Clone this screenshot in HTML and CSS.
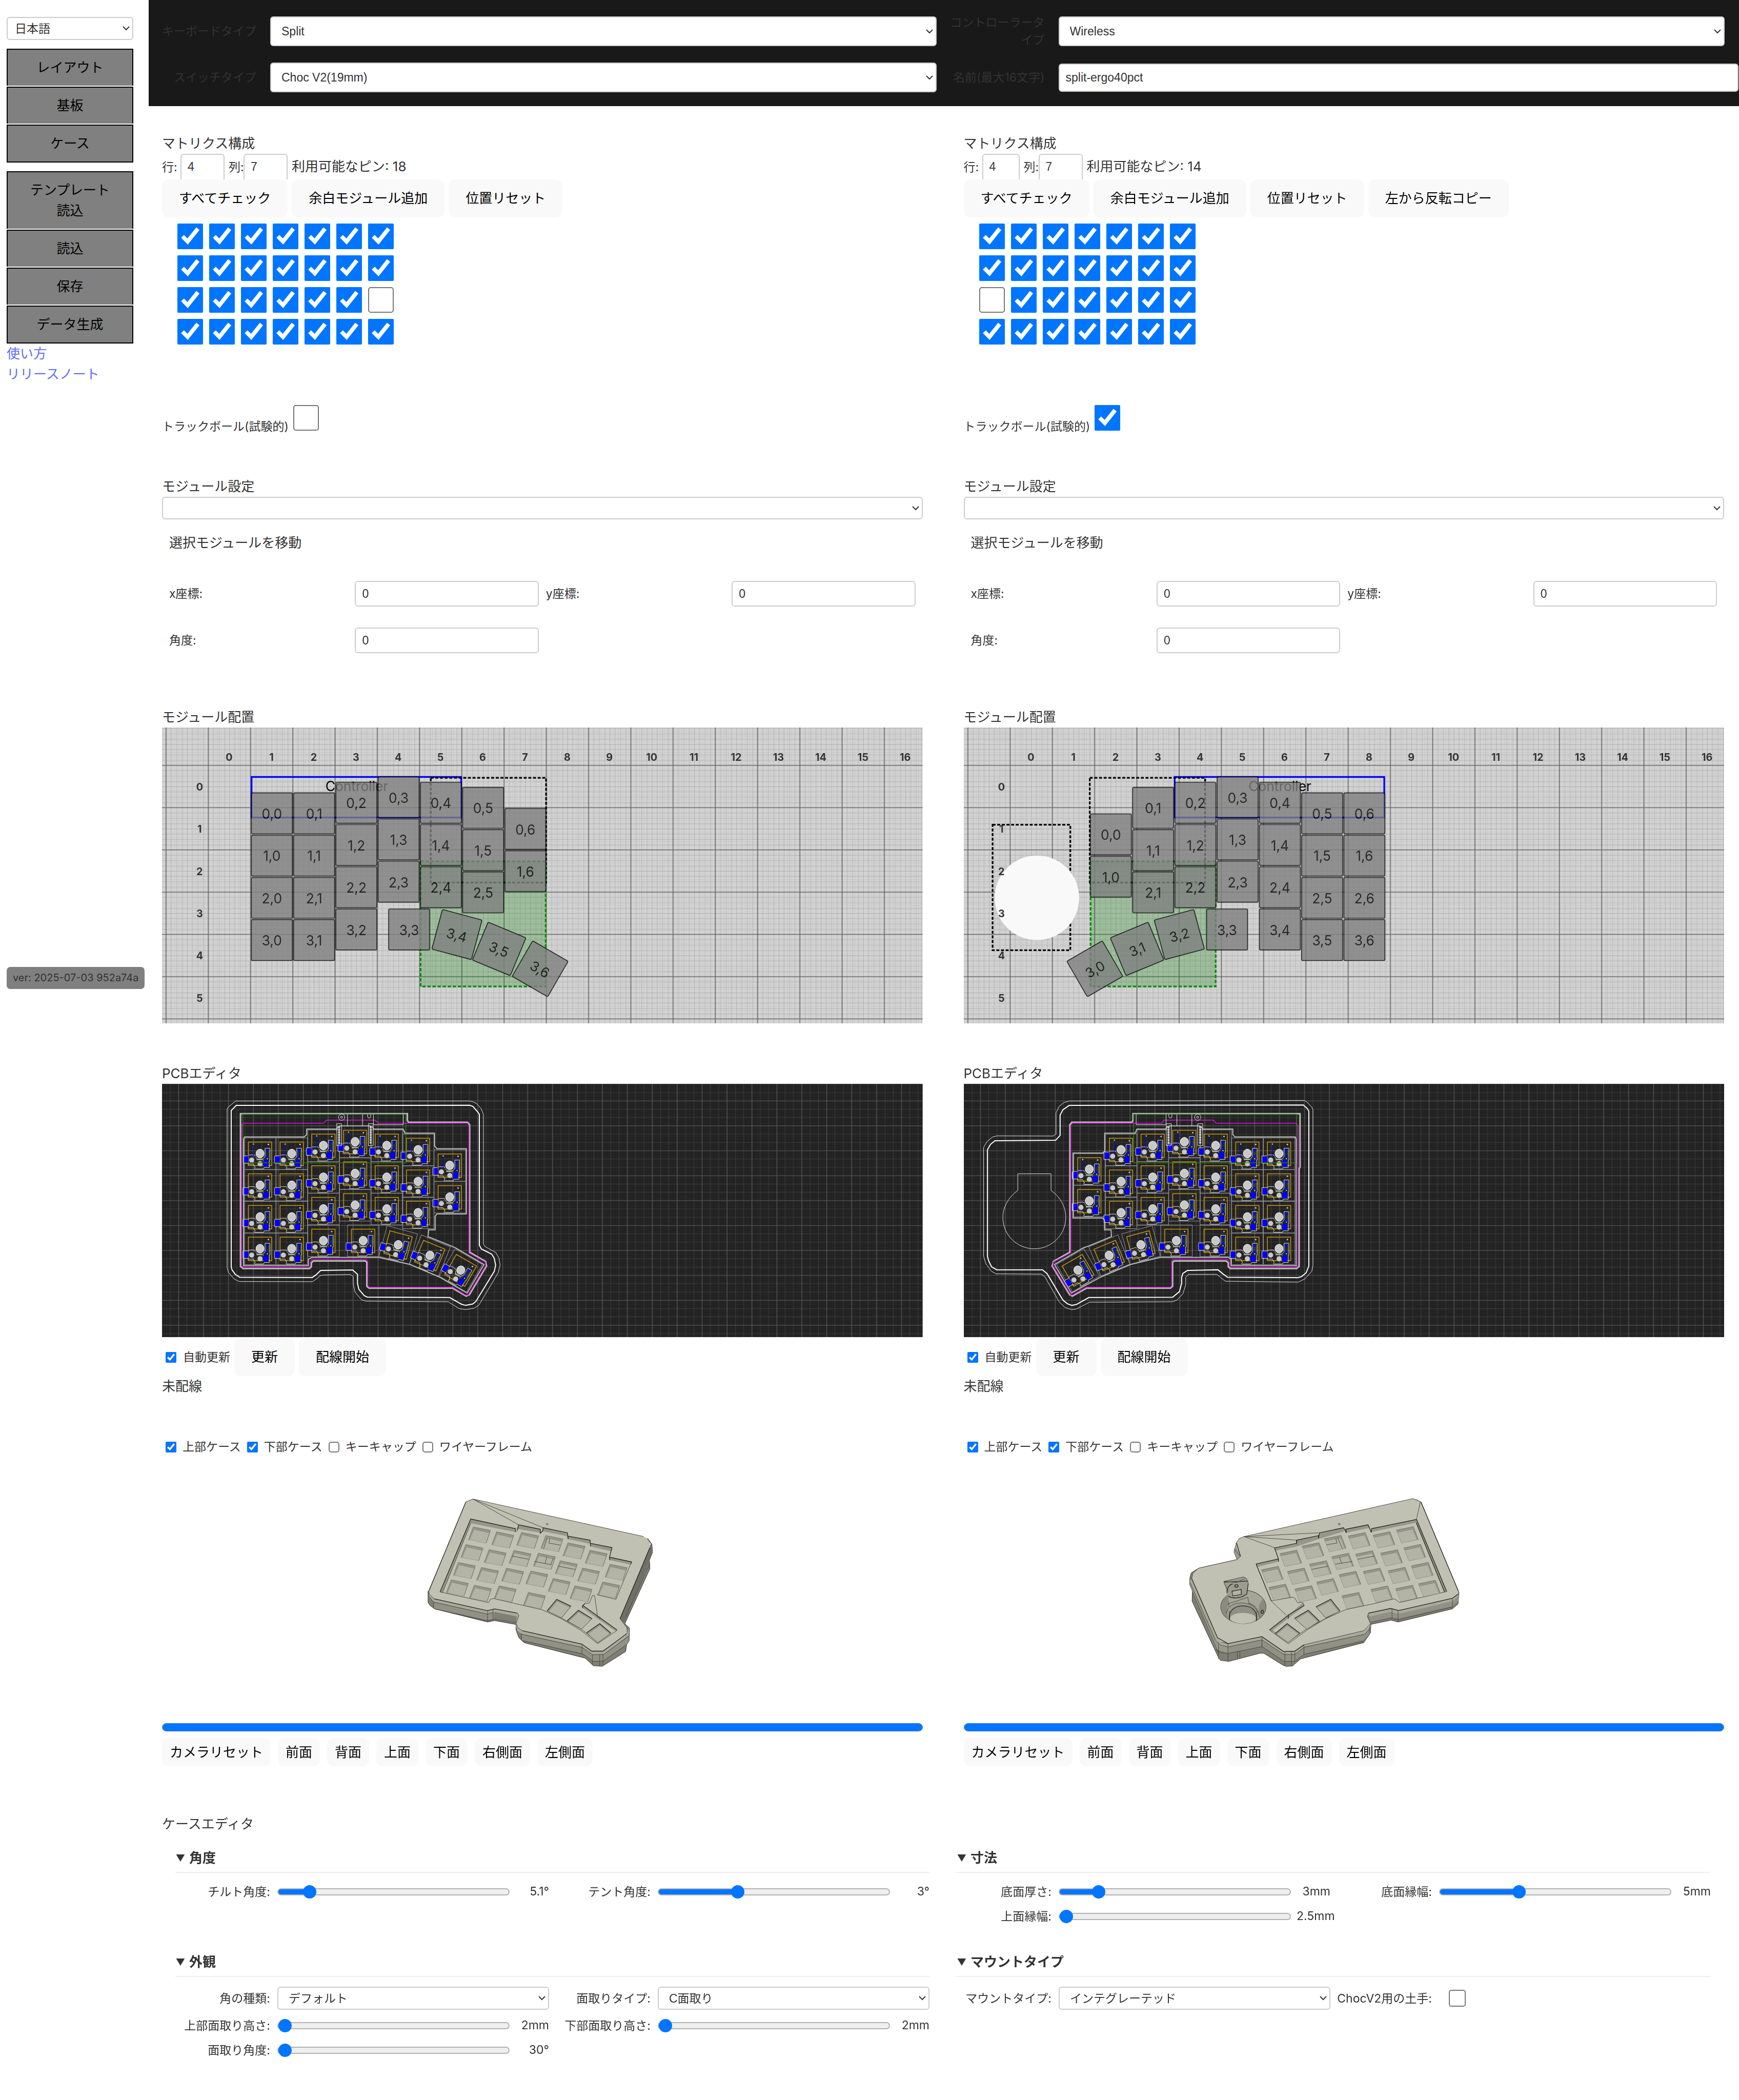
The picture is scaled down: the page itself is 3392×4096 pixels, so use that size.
FILE: index.html
```html
<!DOCTYPE html>
<html lang="ja">
<head>
<meta charset="utf-8">
<title>キーボードエディタ</title>
<link rel="stylesheet" href="styles.css">
</head>
<body>
<svg class="defs" aria-hidden="true">
  <defs>
    <pattern id="grid-tenth" width="10" height="10" patternUnits="userSpaceOnUse" x="9.5" y="9.5"><path d="M0 0H10M0 0V10" class="g-faint"/></pattern>
    <pattern id="grid-eighth" width="12.5" height="12.5" patternUnits="userSpaceOnUse" x="9.5" y="2"><path d="M0 0H12.5M0 0V12.5" class="g-fine"/></pattern>
    <pattern id="grid-unit" width="100" height="100" patternUnits="userSpaceOnUse" x="59.5" y="39.5"><path d="M0 50H100M50 0V100" class="g-unit"/></pattern>
    <pattern id="mm1" width="3.933" height="3.933" patternUnits="userSpaceOnUse" x="39.3" y="40.4"><path d="M0 2H4M2 0V4" class="p-fine"/></pattern>
    <pattern id="mm5" width="19.667" height="19.667" patternUnits="userSpaceOnUse" x="49.1" y="50.2"><path d="M0 9.8H20M9.8 0V20" class="p-mid"/></pattern>
    <pattern id="mm15" width="59" height="59" patternUnits="userSpaceOnUse" x="9.8" y="10.9"><path d="M0 29.5H59M29.5 0V59" class="p-major"/></pattern>
    <rect id="cap" x="-48.5" y="-48.5" width="97" height="97" rx="3"/>

    <!-- switch footprint, origin at the stem -->
    <g id="sw" class="sw">
      <rect x="-37" y="-37" width="74.5" height="74.8" class="cell"/>
      <g transform="scale(.4592 .3571)">
        <rect x="-60" y="-76" width="120" height="155" class="y"/>
        <path class="w" d="M-86 15H-62L-54 9H-28L-24 18M-88 15V65H-62L-56 70H-34L-26 90H-24L-30 98L-28 102H18L22 92H48V42H51V-35H26V20L16 36H-14L-22 22M-62 68V72"/>
        <path class="lg" d="M-18 38H14L22 62M-18 42H10"/>
        <ellipse rx="21" ry="29" class="s wo"/>
        <ellipse cx="-43" cy="43" rx="13" ry="17" class="s"/>
        <ellipse cy="67" rx="13" ry="17" class="s"/>
        <ellipse cx="43" cy="-60" rx="4" ry="5" class="s"/>
        <ellipse cx="38" cy="34" rx="3" ry="4" class="s"/>
        <path class="gn" d="M32 -20H46V25H32Z"/>
        <path class="bl" d="M31 -32V48"/>
        <path class="b" d="M-86 19H-60V60H-86ZM17 46H43V87H17ZM34 -30H43V-12H34ZM34 12H43V28H34Z"/>
      </g>
    </g>
    <g id="swt">
      <use href="#sw"/>
      <path class="bl" d="M-15.6 -22.5V5.4H-29"/>
      <circle cx="-15.6" cy="-22.5" r="1.6" class="s"/>
    </g>

    <!-- key openings of the case model -->
    <g id="hl">
      <path class="floor" d="M0 0L106 25L79 115L-30 91Z"/>
      <path class="wall" d="M0 0L106 25L101 42L6 18L-22 93L-30 91Z"/>
      <path class="e1" d="M-30 91L79 115L101 42L8 18"/>
      <path class="e2" d="M-30 91L0 0L106 25L79 115"/>
    </g>
    <g id="hr">
      <path class="floor" d="M0 0L90 -25L116 67L27 92Z"/>
      <path class="wall" d="M0 0L90 -25L116 67L109 69L85 -7L5 16Z"/>
      <path class="e1" d="M0 0L27 92L116 67M5 16L85 -7"/>
      <path class="e2" d="M0 0L90 -25L116 67"/>
    </g>
  </defs>
</svg>

<div class="app">
<aside class="sidebar">
  <select class="lang" aria-label="言語"><option>日本語</option></select>
  <nav class="menu">
    <button type="button">レイアウト</button>
    <button type="button">基板</button>
    <button type="button">ケース</button>
  </nav>
  <div class="menu">
    <button type="button">テンプレート<br>読込</button>
    <button type="button">読込</button>
    <button type="button">保存</button>
    <button type="button">データ生成</button>
  </div>
  <a href="#usage">使い方</a>
  <a href="#release">リリースノート</a>
  <p class="version">ver: 2025-07-03 952a74a</p>
</aside>

<div class="page">
<header class="topbar">
  <label for="kbd">キーボードタイプ</label>
  <select id="kbd"><option>Split</option></select>
  <label for="ctl">コントローラータイプ</label>
  <select id="ctl"><option>Wireless</option></select>
  <label for="swtype">スイッチタイプ</label>
  <select id="swtype"><option>Choc V2(19mm)</option></select>
  <label for="name">名前(最大16文字)</label>
  <input id="name" type="text" maxlength="16" value="split-ergo40pct">
</header>

<main>
<div class="sides">

<section class="side">
  <h2>マトリクス構成</h2>
  <div class="pins">
    <label for="rl">行:</label><input id="rl" class="num" type="text" value="4">
    <label for="cl">列:</label><input id="cl" class="num" type="text" value="7">
    <span>利用可能なピン: 18</span>
  </div>
  <div class="actions">
    <button type="button">すべてチェック</button>
    <button type="button">余白モジュール追加</button>
    <button type="button">位置リセット</button>
  </div>
  <div class="matrix">
    <input type="checkbox" aria-label="0,0" checked><input type="checkbox" aria-label="0,1" checked><input type="checkbox" aria-label="0,2" checked><input type="checkbox" aria-label="0,3" checked><input type="checkbox" aria-label="0,4" checked><input type="checkbox" aria-label="0,5" checked><input type="checkbox" aria-label="0,6" checked>
    <input type="checkbox" aria-label="1,0" checked><input type="checkbox" aria-label="1,1" checked><input type="checkbox" aria-label="1,2" checked><input type="checkbox" aria-label="1,3" checked><input type="checkbox" aria-label="1,4" checked><input type="checkbox" aria-label="1,5" checked><input type="checkbox" aria-label="1,6" checked>
    <input type="checkbox" aria-label="2,0" checked><input type="checkbox" aria-label="2,1" checked><input type="checkbox" aria-label="2,2" checked><input type="checkbox" aria-label="2,3" checked><input type="checkbox" aria-label="2,4" checked><input type="checkbox" aria-label="2,5" checked><input type="checkbox" aria-label="2,6">
    <input type="checkbox" aria-label="3,0" checked><input type="checkbox" aria-label="3,1" checked><input type="checkbox" aria-label="3,2" checked><input type="checkbox" aria-label="3,3" checked><input type="checkbox" aria-label="3,4" checked><input type="checkbox" aria-label="3,5" checked><input type="checkbox" aria-label="3,6" checked>
  </div>
  <div class="trackball"><label for="tbl">トラックボール(試験的)</label><input id="tbl" type="checkbox"></div>

  <h2>モジュール設定</h2>
  <select class="module" aria-label="モジュール"><option></option></select>
  <div class="move">
    <h3>選択モジュールを移動</h3>
    <div class="fields">
      <div class="field"><label for="xl">x座標:</label><input id="xl" type="text" value="0"></div>
      <div class="field"><label for="yl">y座標:</label><input id="yl" type="text" value="0"></div>
      <div class="field"><label for="al">角度:</label><input id="al" type="text" value="0"></div>
    </div>
  </div>

  <h2 class="canvas-title">モジュール配置</h2>
  <svg class="canvas" viewBox="0 0 1800 700">
    <rect width="1800" height="700" class="board"/>
    <rect width="1800" height="700" fill="url(#grid-tenth)"/><rect width="1800" height="700" fill="url(#grid-eighth)"/><rect width="1800" height="700" fill="url(#grid-unit)"/>
    <rect x="212" y="117" width="496" height="96" class="mcu"/>
    <text x="461" y="151" class="mcu-name">Controller</text>
    <rect x="636" y="119" width="273" height="248" class="battery"/>
    <rect x="612" y="317" width="296" height="296" class="area"/>
    <g class="caps">
      <use href="#cap" x="260" y="203"/><use href="#cap" x="360" y="203"/><use href="#cap" x="460" y="178"/><use href="#cap" x="560" y="165"/><use href="#cap" x="660" y="178"/><use href="#cap" x="760" y="190"/><use href="#cap" x="860" y="240"/>
      <use href="#cap" x="260" y="303"/><use href="#cap" x="360" y="303"/><use href="#cap" x="460" y="278"/><use href="#cap" x="560" y="265"/><use href="#cap" x="660" y="278"/><use href="#cap" x="760" y="290"/><use href="#cap" x="860" y="340"/>
      <use href="#cap" x="260" y="403"/><use href="#cap" x="360" y="403"/><use href="#cap" x="460" y="378"/><use href="#cap" x="560" y="365"/><use href="#cap" x="660" y="378"/><use href="#cap" x="760" y="390"/>
      <use href="#cap" x="260" y="503"/><use href="#cap" x="360" y="503"/><use href="#cap" x="460" y="478"/><use href="#cap" x="585" y="478"/>
      <g transform="translate(698 490) rotate(15)"><use href="#cap"/><text y="13">3,4</text></g>
      <g transform="translate(798 524) rotate(22.5)"><use href="#cap"/><text y="13">3,5</text></g>
      <g transform="translate(895 571) rotate(30)"><use href="#cap"/><text y="13">3,6</text></g>
      <text x="260" y="216">0,0</text><text x="360" y="216">0,1</text><text x="460" y="191">0,2</text><text x="560" y="178">0,3</text><text x="660" y="191">0,4</text><text x="760" y="203">0,5</text><text x="860" y="253">0,6</text>
      <text x="260" y="316">1,0</text><text x="360" y="316">1,1</text><text x="460" y="291">1,2</text><text x="560" y="278">1,3</text><text x="660" y="291">1,4</text><text x="760" y="303">1,5</text><text x="860" y="353">1,6</text>
      <text x="260" y="416">2,0</text><text x="360" y="416">2,1</text><text x="460" y="391">2,2</text><text x="560" y="378">2,3</text><text x="660" y="391">2,4</text><text x="760" y="403">2,5</text>
      <text x="260" y="516">3,0</text><text x="360" y="516">3,1</text><text x="460" y="491">3,2</text><text x="585" y="491">3,3</text>
    </g>
    <g class="ruler">
      <text x="159" y="79">0</text><text x="259" y="79">1</text><text x="359" y="79">2</text><text x="459" y="79">3</text><text x="559" y="79">4</text><text x="659" y="79">5</text><text x="759" y="79">6</text><text x="859" y="79">7</text><text x="959" y="79">8</text><text x="1059" y="79">9</text><text x="1159" y="79">10</text><text x="1259" y="79">11</text><text x="1359" y="79">12</text><text x="1459" y="79">13</text><text x="1559" y="79">14</text><text x="1659" y="79">15</text><text x="1759" y="79">16</text>
      <text x="89" y="149">0</text><text x="89" y="249">1</text><text x="89" y="349">2</text><text x="89" y="449">3</text><text x="89" y="549">4</text><text x="89" y="649">5</text>
    </g>
  </svg>

  <h2 class="pcb-title">PCBエディタ</h2>
  <svg class="canvas" viewBox="0 0 1800 600">
    <rect width="1800" height="600" class="pcb"/>
    <rect width="1800" height="600" fill="url(#mm1)"/><rect width="1800" height="600" fill="url(#mm5)"/><rect width="1800" height="600" fill="url(#mm15)"/>
    <g>
      <use href="#swt" x="232" y="165"/><use href="#swt" x="307" y="165"/><use href="#swt" x="382" y="146"/><use href="#swt" x="457" y="137"/><use href="#swt" x="532" y="146"/><use href="#swt" x="606" y="156"/><use href="#swt" x="681" y="193"/>
      <use href="#sw" x="232" y="240"/><use href="#sw" x="307" y="240"/><use href="#sw" x="382" y="221"/><use href="#sw" x="457" y="212"/><use href="#sw" x="532" y="221"/><use href="#sw" x="606" y="231"/><use href="#sw" x="681" y="268"/>
      <use href="#sw" x="232" y="315"/><use href="#sw" x="307" y="315"/><use href="#sw" x="382" y="296"/><use href="#sw" x="457" y="287"/><use href="#sw" x="532" y="296"/><use href="#sw" x="606" y="305"/>
      <use href="#sw" x="232" y="390"/><use href="#sw" x="307" y="390"/><use href="#sw" x="382" y="371"/><use href="#sw" x="476" y="371"/>
      <use href="#sw" transform="translate(559 381) rotate(15)"/><use href="#sw" transform="translate(634 406) rotate(22.5)"/><use href="#sw" transform="translate(707 441) rotate(30)"/>
    </g>
    <g transform="translate(116 15) scale(.4592 .35714)" class="outline">
      <path class="thin" d="M127 72H1335L1348 76L1368 88L1392 122L1404 160V1020L1412 1036L1467 1075L1484 1112L1490 1160L1480 1210L1380 1425L1355 1445L1312 1454L1280 1448L1222 1402L797 1398L775 1388L742 1338L733 1285V1237L720 1221L576 1225L560 1230L550 1245L523 1269L145 1268L118 1250L90 1208L83 1175V125L90 110Z"/>
      <path class="thick" d="M130 101L1333 100L1350 108L1375 145L1383 160V1027L1393 1052L1447 1087L1460 1115L1467 1160L1460 1200L1365 1400L1348 1417L1312 1426L1290 1418L1230 1374L805 1371L790 1362L762 1320L755 1280V1220L730 1191L565 1195L540 1225L522 1241L148 1240L125 1220L108 1190L104 1170V135Z"/>
      <path class="wide" d="M152 156H1012V200L1018 213H1322L1333 228V1073L1415 1135L1420 1165L1332 1355L1315 1365L1245 1312L815 1312L803 1300V1140L795 1132H527L517 1145V1170L507 1182H165L152 1168Z"/>
      <path class="green" d="M164 160V481H1004V160Z"/>
      <path class="mag" d="M165 219H580L595 198H845L862 219H1322L1329 235V1078L1414 1140L1415 1165L1325 1358L1312 1358L1247 1306H815L808 1295V1135L802 1122H520L512 1140V1165L503 1175H168L158 1160V235Z"/>
      <path class="grey" d="M655 238L648 258H493V295L480 310H173L168 325V1163H502V1120L520 1108H865L1025 1155L1180 1240L1320 1345L1407 1155L1260 1045L1237 1032L1118 970L1122 925H1155V835L1165 820H1316V388H1165L1152 370V285H1000L990 258H838L830 238"/>
      <path class="thin" d="M703 160V237M781 160V237M837 160V228H991V160M807 160V175L811 184H819L823 175V160M648 222H673V368H648ZM811 222H836V368H811ZM660 236H823"/>
      <ellipse class="thin" cx="673" cy="179" rx="16" ry="21"/><ellipse class="thin" cx="673" cy="179" rx="5" ry="7"/>
      <path class="dots" d="M660 238V356M823 238V356"/>
    </g>
  </svg>
  <div class="actions update">
    <label><input type="checkbox" checked>自動更新</label>
    <button type="button">更新</button>
    <button type="button">配線開始</button>
  </div>
  <p class="status">未配線</p>

  <div class="layers">
    <label><input type="checkbox" checked>上部ケース</label>
    <label><input type="checkbox" checked>下部ケース</label>
    <label><input type="checkbox">キーキャップ</label>
    <label><input type="checkbox">ワイヤーフレーム</label>
  </div>
  <svg class="canvas model" viewBox="0 0 1800 610">
    <g transform="translate(596 40) scale(.38265 .33333)">
      <path class="base" d="M88 800L88 880L100 900L128 925L456 1018L500 1008L632 1036L632 1075L650 1130L682 1165L1060 1275L1110 1328L1165 1333L1310 1228L1316 1180L1332 1150L1333 1060L1305 1030L1460 640L1457 580L1476 525L1473 465L1300 600L400 900Z"/>
      <path class="front" d="M125 853L125 922L456 1005L500 995L632 1022L640 965L500 935L455 950ZM670 1080L668 1145L1045 1245L1105 1297L1170 1295L1330 1165L1330 1065L1170 1225L1100 1225L1040 1180ZM500 930L640 958L636 1020L497 992Z"/>
      <path class="right" d="M1473 465L1476 525L1310 1000L1305 1030L1275 995L1460 485Z"/>
      <path class="lip" d="M125 853L455 938L500 925L640 955L650 970L632 1030L645 1060L670 1080L1040 1175L1100 1225L1170 1225L1318 1100L1330 1065V1110L1175 1248H1105L1040 1197L665 1102L640 1080L632 1050L636 978L500 947L455 962L122 875L92 840V800Z"/>
      <path class="e1" d="M92 800L90 830L120 876L455 962L490 950M665 1105L1040 1198L1105 1250L1175 1248L1330 1118M128 925L456 1010L500 997L632 1023M668 1150L1045 1245L1110 1298L1170 1296L1310 1185M456 940V1010M490 930V995M1105 1250V1322M1150 1250V1330M1170 1248V1325M122 880V920M1460 600L1310 985M1040 1180V1245M665 1100V1145"/>
      <path class="face" d="M322 165L340 155L366 145L380 150L1420 411L1445 425L1462 455L1460 490L1275 995L1300 1030L1318 1060L1320 1095L1305 1120L1170 1222L1130 1228L1100 1225L1040 1175L670 1080L645 1060L632 1030L650 970L640 955L500 925L455 938L125 853L95 820L92 795Z"/>
      <path class="wall" d="M352 287L628 355L628 380L352 317L178 808L162 805ZM648 328L785 362L783 385L636 356ZM800 349L950 385L952 408L1090 437L1095 460L1226 490L1218 515L1095 482L1088 462L952 430L945 408L797 373ZM1210 558L1347 592L1343 612L1210 578ZM1045 900L1257 1075L1250 1085L1042 918Z"/>
      <path class="e2" d="M162 805L352 287L628 355L630 380M640 370L648 328L782 360V387L797 373L800 349L950 385L955 430M952 408L1090 437L1093 480M1095 460L1226 490L1210 558L1212 580M1210 558L1347 592L1343 605M1060 885L1042 905L1045 920M1045 900L1257 1075"/>
      <path class="e1" d="M1343 600L1250 857L1132 825M162 805L462 880L475 855L495 852L675 900L795 932L905 990L1030 1075L1137 1172L1257 1078M905 985L1035 1068L1137 1160M366 145L648 328M366 145L800 349M178 808L352 317M1060 885H1085L1105 830H1118L1138 990M1150 1000V980"/>
      <use href="#hl" x="368" y="343"/><use href="#hl" x="512" y="378"/><use href="#hl" x="666" y="382"/><use href="#hl" x="816" y="404"/><use href="#hl" x="953" y="456"/><use href="#hl" x="1090" y="509"/><use href="#hl" x="1213" y="608"/>
      <use href="#hl" x="322" y="468"/><use href="#hl" x="465" y="504"/><use href="#hl" x="619" y="510"/><use href="#hl" x="770" y="530"/><use href="#hl" x="905" y="583"/><use href="#hl" x="1043" y="635"/><use href="#hl" x="1168" y="734"/>
      <use href="#hl" x="275" y="595"/><use href="#hl" x="418" y="631"/><use href="#hl" x="573" y="636"/><use href="#hl" x="723" y="656"/><use href="#hl" x="861" y="709"/><use href="#hl" x="996" y="761"/>
      <use href="#hl" x="231" y="719"/><use href="#hl" x="374" y="757"/><use href="#hl" x="527" y="761"/><use href="#hl" x="708" y="808"/>
      <path class="floor" d="M884 858L972 906L913 989L824 939ZM1018 935L1102 994L1037 1069L948 1010ZM1150 1030L1219 1098L1137 1166L1068 1095Z"/>
      <path class="wall" d="M884 858L972 906L965 917L886 873L836 945L824 939ZM1018 935L1102 994L1094 1002L1020 950L958 1016L948 1010ZM1150 1030L1219 1098L1211 1104L1150 1045L1078 1105L1068 1095Z"/>
      <path class="e2" d="M824 939L884 858L972 906M948 1010L1018 935L1102 994M1068 1095L1150 1030L1219 1098"/>
      <path class="e1" d="M824 939L913 989L972 906M948 1010L1037 1069L1102 994M1068 1095L1137 1166L1219 1098M825 422L802 500M840 425L836 458L905 472M608 550L712 573M745 588L852 612M822 555L812 602M862 565L848 608M895 622L998 645"/>
      <path class="e2" d="M322 165L92 800M1460 490L1275 995M1445 425L1470 465M125 853L455 938L500 925L640 955M670 1080L1040 1175L1100 1225L1170 1225L1318 1100"/>
      <path class="e1" d="M92 795L95 820L125 853M640 955L650 970L632 1030L645 1060L670 1080M322 165L366 145L1420 411M1275 995L1318 1060L1320 1095"/>
      <ellipse cx="825" cy="323" rx="5" ry="6" class="e1"/>
    </g>
  </svg>
  <progress value="1" max="1" aria-label="進捗"></progress>
  <div class="views">
    <button type="button">カメラリセット</button>
    <button type="button">前面</button>
    <button type="button">背面</button>
    <button type="button">上面</button>
    <button type="button">下面</button>
    <button type="button">右側面</button>
    <button type="button">左側面</button>
  </div>
</section>

<section class="side">
  <h2>マトリクス構成</h2>
  <div class="pins">
    <label for="rr">行:</label><input id="rr" class="num narrow" type="text" value="4">
    <label for="cr">列:</label><input id="cr" class="num" type="text" value="7">
    <span>利用可能なピン: 14</span>
  </div>
  <div class="actions">
    <button type="button">すべてチェック</button>
    <button type="button">余白モジュール追加</button>
    <button type="button">位置リセット</button>
    <button type="button">左から反転コピー</button>
  </div>
  <div class="matrix">
    <input type="checkbox" aria-label="0,0" checked><input type="checkbox" aria-label="0,1" checked><input type="checkbox" aria-label="0,2" checked><input type="checkbox" aria-label="0,3" checked><input type="checkbox" aria-label="0,4" checked><input type="checkbox" aria-label="0,5" checked><input type="checkbox" aria-label="0,6" checked>
    <input type="checkbox" aria-label="1,0" checked><input type="checkbox" aria-label="1,1" checked><input type="checkbox" aria-label="1,2" checked><input type="checkbox" aria-label="1,3" checked><input type="checkbox" aria-label="1,4" checked><input type="checkbox" aria-label="1,5" checked><input type="checkbox" aria-label="1,6" checked>
    <input type="checkbox" aria-label="2,0"><input type="checkbox" aria-label="2,1" checked><input type="checkbox" aria-label="2,2" checked><input type="checkbox" aria-label="2,3" checked><input type="checkbox" aria-label="2,4" checked><input type="checkbox" aria-label="2,5" checked><input type="checkbox" aria-label="2,6" checked>
    <input type="checkbox" aria-label="3,0" checked><input type="checkbox" aria-label="3,1" checked><input type="checkbox" aria-label="3,2" checked><input type="checkbox" aria-label="3,3" checked><input type="checkbox" aria-label="3,4" checked><input type="checkbox" aria-label="3,5" checked><input type="checkbox" aria-label="3,6" checked>
  </div>
  <div class="trackball"><label for="tbr">トラックボール(試験的)</label><input id="tbr" type="checkbox" checked></div>

  <h2>モジュール設定</h2>
  <select class="module" aria-label="モジュール"><option></option></select>
  <div class="move">
    <h3>選択モジュールを移動</h3>
    <div class="fields">
      <div class="field"><label for="xr">x座標:</label><input id="xr" type="text" value="0"></div>
      <div class="field"><label for="yr">y座標:</label><input id="yr" type="text" value="0"></div>
      <div class="field"><label for="ar">角度:</label><input id="ar" type="text" value="0"></div>
    </div>
  </div>

  <h2 class="canvas-title">モジュール配置</h2>
  <svg class="canvas" viewBox="0 0 1800 700">
    <rect width="1800" height="700" class="board"/>
    <rect width="1800" height="700" fill="url(#grid-tenth)"/><rect width="1800" height="700" fill="url(#grid-eighth)"/><rect width="1800" height="700" fill="url(#grid-unit)"/>
    <rect x="499" y="117" width="496" height="96" class="mcu"/>
    <text x="748" y="151" class="mcu-name">Controller</text>
    <rect x="298" y="119" width="273" height="248" class="battery"/>
    <rect x="300" y="317" width="296" height="296" class="area"/>
    <rect x="68" y="230" width="184" height="297" class="battery"/>
    <circle cx="173" cy="403" r="100" class="ball"/>
    <g class="caps">
      <use href="#cap" x="348" y="253"/><use href="#cap" x="448" y="190"/><use href="#cap" x="548" y="178"/><use href="#cap" x="648" y="165"/><use href="#cap" x="748" y="178"/><use href="#cap" x="848" y="203"/><use href="#cap" x="948" y="203"/>
      <use href="#cap" x="348" y="353"/><use href="#cap" x="448" y="290"/><use href="#cap" x="548" y="278"/><use href="#cap" x="648" y="265"/><use href="#cap" x="748" y="278"/><use href="#cap" x="848" y="303"/><use href="#cap" x="948" y="303"/>
      <use href="#cap" x="448" y="390"/><use href="#cap" x="548" y="378"/><use href="#cap" x="648" y="365"/><use href="#cap" x="748" y="378"/><use href="#cap" x="848" y="403"/><use href="#cap" x="948" y="403"/>
      <use href="#cap" x="623" y="478"/><use href="#cap" x="748" y="478"/><use href="#cap" x="848" y="503"/><use href="#cap" x="948" y="503"/>
      <g transform="translate(510 490) rotate(-15)"><use href="#cap"/><text y="13">3,2</text></g>
      <g transform="translate(410 524) rotate(-22.5)"><use href="#cap"/><text y="13">3,1</text></g>
      <g transform="translate(310 571) rotate(-30)"><use href="#cap"/><text y="13">3,0</text></g>
      <text x="348" y="266">0,0</text><text x="448" y="203">0,1</text><text x="548" y="191">0,2</text><text x="648" y="178">0,3</text><text x="748" y="191">0,4</text><text x="848" y="216">0,5</text><text x="948" y="216">0,6</text>
      <text x="348" y="366">1,0</text><text x="448" y="303">1,1</text><text x="548" y="291">1,2</text><text x="648" y="278">1,3</text><text x="748" y="291">1,4</text><text x="848" y="316">1,5</text><text x="948" y="316">1,6</text>
      <text x="448" y="403">2,1</text><text x="548" y="391">2,2</text><text x="648" y="378">2,3</text><text x="748" y="391">2,4</text><text x="848" y="416">2,5</text><text x="948" y="416">2,6</text>
      <text x="623" y="491">3,3</text><text x="748" y="491">3,4</text><text x="848" y="516">3,5</text><text x="948" y="516">3,6</text>
    </g>
    <g class="ruler">
      <text x="159" y="79">0</text><text x="259" y="79">1</text><text x="359" y="79">2</text><text x="459" y="79">3</text><text x="559" y="79">4</text><text x="659" y="79">5</text><text x="759" y="79">6</text><text x="859" y="79">7</text><text x="959" y="79">8</text><text x="1059" y="79">9</text><text x="1159" y="79">10</text><text x="1259" y="79">11</text><text x="1359" y="79">12</text><text x="1459" y="79">13</text><text x="1559" y="79">14</text><text x="1659" y="79">15</text><text x="1759" y="79">16</text>
      <text x="89" y="149">0</text><text x="89" y="249">1</text><text x="89" y="349">2</text><text x="89" y="449">3</text><text x="89" y="549">4</text><text x="89" y="649">5</text>
    </g>
  </svg>

  <h2 class="pcb-title">PCBエディタ</h2>
  <svg class="canvas" viewBox="0 0 1800 600">
    <rect width="1800" height="600" class="pcb"/>
    <rect width="1800" height="600" fill="url(#mm1)"/><rect width="1800" height="600" fill="url(#mm5)"/><rect width="1800" height="600" fill="url(#mm15)"/>
    <g>
      <use href="#swt" x="297" y="202"/><use href="#swt" x="372" y="156"/><use href="#swt" x="447" y="146"/><use href="#swt" x="522" y="137"/><use href="#swt" x="596" y="146"/><use href="#swt" x="671" y="165"/><use href="#swt" x="746" y="165"/>
      <use href="#sw" x="297" y="277"/><use href="#sw" x="372" y="231"/><use href="#sw" x="447" y="221"/><use href="#sw" x="522" y="212"/><use href="#sw" x="596" y="221"/><use href="#sw" x="671" y="240"/><use href="#sw" x="746" y="240"/>
      <use href="#sw" x="372" y="305"/><use href="#sw" x="447" y="296"/><use href="#sw" x="522" y="287"/><use href="#sw" x="596" y="296"/><use href="#sw" x="671" y="315"/><use href="#sw" x="746" y="315"/>
      <use href="#sw" x="503" y="371"/><use href="#sw" x="596" y="371"/><use href="#sw" x="671" y="390"/><use href="#sw" x="746" y="390"/>
      <use href="#sw" transform="translate(419 381) rotate(-15)"/><use href="#sw" transform="translate(344 406) rotate(-22.5)"/><use href="#sw" transform="translate(270 441) rotate(-30)"/>
    </g>
    <g transform="translate(20 15) scale(.5357 .35714)" class="outline">
      <path class="thin" d="M428 72L1468 68L1480 80L1500 112L1505 130V1160L1500 1200L1470 1250L1440 1272L1118 1266L1100 1245L1080 1220H955L943 1240V1290L930 1350L905 1390L885 1402L518 1405L460 1450L438 1454L410 1440L385 1405L320 1235L305 1219L105 1217L85 1200L60 1150L50 1100V380L65 340L90 310L108 303L357 304L370 290V150L385 105L405 82Z"/>
      <path class="thick" d="M428 101L1463 98L1480 122L1487 140V1165L1475 1210L1455 1235L1440 1242L1128 1240L1108 1218L1085 1190L950 1195L930 1215L925 1240V1280L915 1335L885 1372L515 1374L460 1420L440 1426L420 1415L400 1390L330 1215L310 1190H108L85 1170L72 1130L67 1100V395L80 360L100 335L368 332L388 300V165L400 130Z"/>
      <path class="wide" d="M1448 156H710V200L705 213H440L431 228V1073L358 1135L353 1165L430 1355L442 1365L505 1312L875 1312L885 1300V1140L892 1132H1122L1131 1145V1170L1140 1182H1433L1444 1168V520L1448 510Z"/>
      <path class="green" d="M713 160V481H1433V160Z"/>
      <path class="mag" d="M1430 219H1077L1065 198H848L836 219H442L435 235V1078L357 1140V1165L436 1358L446 1355L503 1306H875L881 1295V1135L886 1122H1128L1135 1140V1165L1143 1175H1428L1439 1160V235Z"/>
      <path class="grey" d="M1010 238L1018 258H1151V295L1160 310H1427L1431 325V1163H1143V1120L1130 1108H830L700 1155L565 1240L438 1345L363 1155L490 1045L515 1032L615 970L613 925H584V860L575 847H445V417H575L585 405V285H720L727 258H855L862 238"/>
      <path class="thin" d="M904 160V237M970 160V237M724 160V228H856V160M868 160V175L872 184H878L882 175V160M857 222H879V368H857ZM996 222H1018V368H996ZM867 236H1007"/>
      <ellipse class="thin" cx="996" cy="179" rx="14" ry="21"/><ellipse class="thin" cx="996" cy="179" rx="4" ry="7"/>
      <path class="dots" d="M867 238V356M1007 238V356"/>
      <path class="thin" d="M201 554H348V664C390 710 413 775 413 843C413 960 350 1051 274 1051C198 1051 135 960 135 843C135 775 160 710 201 664Z"/>
    </g>
  </svg>
  <div class="actions update">
    <label><input type="checkbox" checked>自動更新</label>
    <button type="button">更新</button>
    <button type="button">配線開始</button>
  </div>
  <p class="status">未配線</p>

  <div class="layers">
    <label><input type="checkbox" checked>上部ケース</label>
    <label><input type="checkbox" checked>下部ケース</label>
    <label><input type="checkbox">キーキャップ</label>
    <label><input type="checkbox">ワイヤーフレーム</label>
  </div>
  <svg class="canvas model" viewBox="0 0 1800 610">
    <g transform="translate(500 40) scale(.44643 .33333)">
      <path class="base" d="M325 455L312 520L328 575L125 636L85 670L77 715V750L92 800L90 870L228 1265L240 1290L285 1298L450 1240L470 1240L572 1325L590 1333L622 1331L665 1280L1000 1165L1036 1095L1038 1035L1145 1005L1182 1018L1470 925L1500 890L1505 810L1303 165Z"/>
      <path class="left" d="M88 710L225 1130L280 1172V1240L215 1210L77 750V715ZM325 455L347 552L328 575L312 520Z"/>
      <path class="front" d="M280 1172L460 1122V1195L280 1240ZM460 1122L575 1228L635 1225V1297L578 1298L465 1195ZM683 1180L1000 1080L1036 1040V1095L1000 1145L683 1248L635 1297V1225ZM1025 955L1143 922L1185 937L1470 850L1502 815V870L1470 905L1182 995L1145 988L1036 1020Z"/>
      <path class="lip" d="M88 710L225 1130L245 1160L280 1172L460 1122L575 1228H635L683 1180L1000 1080L1030 1050L1036 1060L1005 1105L683 1198L637 1247L578 1250L460 1145L280 1195L240 1182L215 1150L80 740ZM1025 960L1143 922L1185 937L1470 850L1502 815V835L1472 870L1185 960L1143 945L1030 980Z"/>
      <path class="e1" d="M80 740L215 1150L240 1182L280 1195L460 1145L578 1250L637 1247L683 1198L1005 1105L1036 1060M215 1210L240 1235L280 1242L460 1193L578 1298L637 1297L683 1248L1000 1155M1036 1020L1145 990L1182 1002L1470 912M230 1165V1280M280 1172V1296M330 1230V1278M343 1226V1273M460 1125V1195M582 1230V1330M617 1230V1330M635 1228V1297M683 1182V1248M1150 928V992M1182 940V1015M1030 1050V1095M1470 855V920M90 800L230 1240M347 552L312 500"/>
      <path class="face" d="M325 455L340 425L365 412L1260 142L1285 148L1303 165L1502 800L1500 820L1470 850L1185 937L1143 922L1025 955L1020 980L1036 1030L1030 1050L1000 1080L683 1180L635 1225L575 1228L460 1122L280 1172L245 1160L225 1130L88 710L95 670L125 636L328 575L347 552L325 490Z"/>
      <path class="wall" d="M1278 287L1042 355L1040 380L1278 312L1428 805L1440 802ZM1023 328L905 360L908 385L1030 350ZM893 349L765 385L760 405L645 437L643 465L527 492L533 512L643 482L760 430L895 375ZM548 570L430 606L433 628L548 590ZM680 878L685 905L510 1085L500 1075L605 965Z"/>
      <path class="e2" d="M1440 802L1280 290L1042 355L1040 382L1023 328L905 360L908 385L893 349L765 385L760 425V405L645 437L643 465V437M643 460L527 492L548 570V590M548 570L430 606L435 625L510 868M500 1075L605 965L685 900M600 965V995M1278 312L1428 805"/>
      <path class="e1" d="M510 868L625 842L635 850L650 882L672 878L685 900M500 1075L600 1173L700 1075L790 1000L905 930L1065 885L1155 855L1165 855L1190 880L1440 802M510 870L590 970M510 1075L600 1160L700 1065L850 955M365 412L760 385M365 412L645 437M365 412L527 490M1300 165L1280 287M280 1172L245 1160M1025 955L1020 980"/>
      <use href="#hr" x="457" y="648"/><use href="#hr" x="555" y="533"/><use href="#hr" x="673" y="480"/><use href="#hr" x="790" y="428"/><use href="#hr" x="918" y="408"/><use href="#hr" x="1049" y="402"/><use href="#hr" x="1173" y="366"/>
      <use href="#hr" x="496" y="774"/><use href="#hr" x="595" y="660"/><use href="#hr" x="712" y="608"/><use href="#hr" x="830" y="555"/><use href="#hr" x="957" y="537"/><use href="#hr" x="1089" y="530"/><use href="#hr" x="1212" y="492"/>
      <use href="#hr" x="634" y="785"/><use href="#hr" x="750" y="735"/><use href="#hr" x="869" y="683"/><use href="#hr" x="997" y="660"/><use href="#hr" x="1129" y="655"/><use href="#hr" x="1252" y="620"/>
      <use href="#hr" x="884" y="833"/><use href="#hr" x="1037" y="787"/><use href="#hr" x="1169" y="782"/><use href="#hr" x="1290" y="747"/>
      <path class="floor" d="M747 910L825 857L874 940L798 989ZM633 992L706 935L765 1012L698 1070ZM531 1100L594 1030L661 1098L599 1164Z"/>
      <path class="wall" d="M747 910L825 857L874 940L866 944L822 873L753 920ZM633 992L706 935L765 1012L757 1018L704 950L640 1002ZM531 1100L594 1030L661 1098L653 1104L594 1046L538 1108Z"/>
      <path class="e2" d="M747 910L825 857L874 940M633 992L706 935L765 1012M531 1100L594 1030L661 1098"/>
      <path class="e1" d="M747 910L798 989L874 940M633 992L698 1070L765 1012M531 1100L599 1164L661 1098M802 470L858 458L852 425M862 420L888 500M968 573L1058 550M848 608L940 588M872 558L882 600M722 645L812 622"/>
      <path class="e2" d="M1303 165L1502 800M1470 850L1185 937L1143 922L1025 955M683 1180L635 1225L575 1228L460 1122L280 1172L225 1130L88 710M1500 820L1470 850M325 455L347 552"/>
      <path class="e1" d="M88 710L95 670L125 636L328 575L347 552M325 455L340 425L365 412L1260 142L1303 165M683 1180L1000 1080L1036 1030L1020 980"/>
      <ellipse cx="870" cy="323" rx="5" ry="6" class="e1"/>
      <!-- trackball socket -->
      <ellipse cx="362" cy="911" rx="120" ry="119" class="bowl"/>
      <path class="bowl-dark" d="M280 820C235 870 235 950 285 1005L275 930L285 880ZM440 1000C480 960 490 900 465 850L445 900Z"/>
      <path class="collar" d="M272 960C275 900 320 880 358 883C400 885 440 920 448 985L432 1005C440 930 400 903 358 903C320 903 280 935 288 1000Z"/>
      <path class="tube" d="M288 1000C280 935 320 903 358 903C400 903 440 930 432 1010C400 1035 320 1035 288 1000Z"/>
      <ellipse cx="360" cy="992" rx="68" ry="38" class="face"/>
      <path class="e1" d="M272 960C275 900 320 880 358 883C400 885 440 920 448 985M280 890L385 843L390 880L425 910M285 880V910M288 940V1000M432 940V1008M390 885C420 895 440 930 442 960"/>
      <path class="e2" d="M288 1000C280 935 320 903 358 903C400 903 440 930 432 1010"/>
      <path class="collar" d="M258 730L362 698L378 708L388 745L380 820C350 850 310 860 285 845L272 800Z"/>
      <path class="e2" d="M258 735L388 728M275 815C275 780 285 755 305 748M388 745L380 820C350 850 310 855 282 835M302 800L350 787L352 822L306 832Z"/>
      <path class="e1" d="M258 730L362 698L378 708L388 745M258 735L280 800M262 730L325 738L370 710"/>
      <path class="floor" d="M304 802L348 790V820L307 830Z"/>
      <ellipse cx="325" cy="762" rx="9" ry="9" class="e2"/><ellipse cx="462" cy="946" rx="6" ry="12" class="e2"/>
    </g>
  </svg>
  <progress value="1" max="1" aria-label="進捗"></progress>
  <div class="views">
    <button type="button">カメラリセット</button>
    <button type="button">前面</button>
    <button type="button">背面</button>
    <button type="button">上面</button>
    <button type="button">下面</button>
    <button type="button">右側面</button>
    <button type="button">左側面</button>
  </div>
</section>
</div>

<section class="case">
  <h2>ケースエディタ</h2>
  <div class="groups">
    <div class="group">
      <h4><span class="mark">▼</span>角度</h4>
      <div class="params">
        <div class="param"><label for="tilt">チルト角度:</label><input id="tilt" type="range" min="0" max="45" step="0.1" value="5.1" style="--p:.113"><output>5.1°</output></div>
        <div class="param"><label for="tent">テント角度:</label><input id="tent" type="range" min="0" max="9" step="0.1" value="3" style="--p:.333"><output>3°</output></div>
      </div>
    </div>
    <div class="group">
      <h4><span class="mark">▼</span>寸法</h4>
      <div class="params">
        <div class="param"><label for="thick">底面厚さ:</label><input id="thick" type="range" min="0" max="20" step="0.1" value="3" style="--p:.15"><output>3mm</output></div>
        <div class="param"><label for="brim">底面縁幅:</label><input id="brim" type="range" min="0" max="15" step="0.1" value="5" style="--p:.333"><output>5mm</output></div>
        <div class="param"><label for="top">上面縁幅:</label><input id="top" type="range" min="2.5" max="10" step="0.1" value="2.5" style="--p:0"><output>2.5mm</output></div>
      </div>
    </div>
    <div class="group">
      <h4><span class="mark">▼</span>外観</h4>
      <div class="params">
        <div class="param"><label for="corner">角の種類:</label><select id="corner"><option>デフォルト</option></select></div>
        <div class="param"><label for="cham">面取りタイプ:</label><select id="cham"><option>C面取り</option></select></div>
        <div class="param"><label for="ch1">上部面取り高さ:</label><input id="ch1" type="range" min="2" max="10" value="2" style="--p:0"><output>2mm</output></div>
        <div class="param"><label for="ch2">下部面取り高さ:</label><input id="ch2" type="range" min="2" max="10" value="2" style="--p:0"><output>2mm</output></div>
        <div class="param"><label for="ch3">面取り角度:</label><input id="ch3" type="range" min="30" max="60" value="30" style="--p:0"><output>30°</output></div>
      </div>
    </div>
    <div class="group">
      <h4><span class="mark">▼</span>マウントタイプ</h4>
      <div class="params">
        <div class="param"><label for="mount">マウントタイプ:</label><select id="mount"><option>インテグレーテッド</option></select></div>
        <div class="param"><label for="bank">ChocV2用の土手:</label><input id="bank" class="bank" type="checkbox"></div>
      </div>
    </div>
  </div>
</section>
</main>
</div>
</div>
</body>
</html>
```
FILE: styles.css
```css
* { box-sizing: border-box; }
body {
  margin: 0;
  background: #fff;
  color: #333;
  font: 400 26px/40px Inter, "Noto Sans CJK JP", sans-serif;
  overflow-x: hidden;
}
h2, h3, h4, p { margin: 0; font-size: 26px; font-weight: 400; line-height: 40px; }
button, input, select { font: inherit; color: inherit; margin: 0; }
label { font-size: 23px; line-height: 34px; }
.defs { position: absolute; width: 0; height: 0; }

.app { display: flex; align-items: flex-start; }
.page { flex: 1; min-width: 0; }

/* form controls */
select, input[type="text"] {
  border: 2px solid #ccc;
  border-radius: 6px;
  background: #fff;
  font-family: "Liberation Sans", "Noto Sans CJK JP", sans-serif;
  font-size: 23px;
}
input[type="text"] { padding: 0 12px; }
select {
  appearance: none;
  background: #fff url("data:image/svg+xml,%3Csvg xmlns='http://www.w3.org/2000/svg' width='14' height='9'%3E%3Cpath d='M1 1l6 6 6-6' fill='none' stroke='%23333' stroke-width='2'/%3E%3C/svg%3E") no-repeat right 5px center;
  padding: 0 20px;
}
input[type="checkbox"] { accent-color: #0075ff; flex: none; }
input[type="checkbox"]:not(:checked) {
  appearance: none;
  border: 2px solid #767676;
  border-radius: 5px;
  background: #fff;
}
button { border: 0; background: #f9f9f9; color: #000; border-radius: 13px; white-space: nowrap; }

/* sidebar */
.sidebar {
  flex: none;
  width: 290px;
  padding: 33px 30px 0 13px;
  display: flex;
  flex-direction: column;
}
.lang { height: 45px; padding: 0 14px; }
.menu { display: flex; flex-direction: column; gap: 2px; margin-top: 17px; }
.menu button {
  min-height: 72px;
  padding: 15px 0;
  background: #808080;
  border: 2px solid #000;
  border-bottom: 0;
  border-radius: 0;
}
.menu button:last-child { border-bottom: 2px solid #000; }
.sidebar a { color: #646cff; text-decoration: none; }
.version {
  align-self: flex-start;
  margin-top: 1136px;
  padding: 6px 12px;
  border-radius: 7px;
  background: #808080;
  font-size: 20px;
  line-height: 31px;
  white-space: nowrap;
}

/* header */
.topbar {
  display: grid;
  grid-template-columns: 184px 1fr 184px 1fr;
  grid-auto-rows: 58px;
  gap: 32px 27px;
  align-items: center;
  padding: 32px 28px 27px 26px;
  background: #191919;
}
.topbar label { text-align: right; }
.topbar select { height: 58px; }
#name { height: 55px; width: calc(100% + 27px); }

main { padding: 53px 29px 80px 26px; }
.sides { display: grid; grid-template-columns: 1fr 1fr; gap: 80px; }
.side { min-width: 0; }

.pins { display: flex; height: 50px; align-items: center; overflow: hidden; }
.pins label { width: 36px; padding-top: 2px; }
.pins .num { width: 86px; height: 54px; align-self: flex-start; margin-right: 8px; padding-bottom: 4px; }
.pins .num.narrow { width: 73px; }
.pins .num + label { width: 29px; }

.actions { display: flex; gap: 8px; }
.actions button { height: 74px; padding: 0 33px; }

.matrix {
  display: grid;
  grid-template-columns: repeat(7, 50px);
  gap: 12px;
  margin: 12px 0 0 30px;
}
.matrix input, .trackball input { width: 50px; height: 50px; }
.trackball { display: flex; align-items: baseline; gap: 9px; height: 50px; margin: 118px 0 89px; }

.module { display: block; width: 100%; height: 44px; }
.move { padding: 26px 14px 0; }
.fields { display: grid; grid-template-columns: 1fr 1fr; gap: 41px 14px; margin-top: 54px; }
.field { display: grid; grid-template-columns: 1fr 1fr; gap: 4px; align-items: center; }
.field input { height: 50px; min-width: 0; }

/* drawings */
.canvas-title { margin-top: 105px; }
.pcb-title { margin-top: 78px; }
.canvas { display: block; width: 100%; }
.board { fill: #d3d3d3; }
.g-faint, .g-fine, .g-unit { fill: none; stroke: #000; }
.g-faint { stroke-width: 1; stroke-opacity: .1; }
.g-fine { stroke-width: 2; stroke-opacity: .15; }
.g-unit { stroke-width: 2; stroke-opacity: .45; }
.mcu { fill: none; stroke: #00f; stroke-width: 4; }
.mcu-name { font-size: 32px; text-anchor: middle; fill: #000; }
.battery { fill: none; stroke: #000; stroke-width: 4; stroke-dasharray: 7 4; }
.area { fill: rgba(0, 128, 0, .25); stroke: #0a8a0a; stroke-width: 4; stroke-dasharray: 8 4; }
.ball { fill: #f9f9f9; }
.caps { opacity: .8; }
.caps use { fill: #808080; stroke: #000; stroke-width: 2; }
.caps text { font-size: 32px; text-anchor: middle; fill: #000; }
.ruler text { font-size: 24px; font-weight: 700; text-anchor: middle; fill: #333; }

.pcb { fill: #1c1c1c; }
.p-fine { stroke: #2b2b2b; stroke-width: 1; }
.p-mid { stroke: #3d3d3d; stroke-width: 1; }
.p-major { stroke: #555; stroke-width: 1.4; }
.sw *, .bl, .outline * { vector-effect: non-scaling-stroke; }
.cell { fill: none; stroke: #999; stroke-width: 1; }
.y { fill: none; stroke: #c8960c; stroke-width: 1.5; }
.w { fill: none; stroke: #ddd; stroke-width: 1; }
.lg { fill: none; stroke: #b5c8a8; stroke-width: 1; }
.s { fill: #c8c8c8; }
.wo { stroke: #fff; stroke-width: 1; }
.gn { fill: none; stroke: #2e7d1a; stroke-width: 1; }
.b { fill: #00f; }
.bl { fill: none; stroke: #00f; stroke-width: 1; }
.outline * { fill: none; }
.thin { stroke: #e8e8e8; stroke-width: 1; }
.thick { stroke: #fff; stroke-width: 2; }
.wide { stroke: #bbb; stroke-width: 3; }
.green { stroke: #2e7d1a; stroke-width: 1.5; }
.mag { stroke: #e010e0; stroke-width: 1.5; }
.grey { stroke: #bbb; stroke-width: 2; }
.dots { stroke: #ccc; stroke-width: 4; stroke-dasharray: 4 1; }

.update { margin-top: 2px; }
.update label { display: flex; align-items: center; gap: 13px; padding-left: 7px; }
.update input, .layers input { width: 21px; height: 21px; }
.layers { display: flex; gap: 12px; margin-top: 81px; padding-left: 7px; }
.layers label { display: flex; align-items: center; gap: 12px; }
.model { margin-top: 12px; }
.model path, .model ellipse { vector-effect: non-scaling-stroke; }
.face { fill: #c1c1b3; }
.floor { fill: #b3b3a6; }
.wall { fill: #96968a; }
.base { fill: #7f7f74; stroke: #33332e; stroke-width: 1; }
.front { fill: #919185; }
.right { fill: #6f6f67; }
.left { fill: #98988b; }
.lip { fill: #a9a99c; }
.bowl { fill: #a5a598; stroke: #33332e; stroke-width: 1; }
.bowl-dark { fill: #8a8a7e; }
.collar { fill: #9c9c90; }
.tube { fill: #8f8f83; }
.e1 { fill: none; stroke: #4a4a42; stroke-width: 1; }
.e2 { fill: none; stroke: #22221e; stroke-width: 1.3; }

progress {
  appearance: none;
  display: block;
  width: 100%;
  height: 16px;
  margin: 7px 0 13px;
  border: 1px solid #3a70b8;
  border-radius: 8px;
  background: #0075ff;
  overflow: hidden;
}
progress::-webkit-progress-bar { background: #efefef; }
progress::-webkit-progress-value { background: #0075ff; }
.views { display: flex; gap: 14px; }
.views button { height: 55px; padding: 0 15px; }

/* case editor */
.case { margin-top: 93px; }
.groups { display: grid; grid-template-columns: 1fr 1fr; gap: 52px 53px; padding: 26px 26px 0; }
.group { min-width: 0; }
h4 { display: flex; align-items: center; gap: 7px; padding-bottom: 7px; border-bottom: 2px solid #eee; font-weight: 700; }
.mark { font-size: 18px; width: 20px; text-align: center; }
.params { display: grid; grid-template-columns: 1fr 1fr; gap: 13px; margin-top: 19px; }
.param {
  display: grid;
  grid-template-columns: 185px 1fr 66px;
  align-items: center;
  min-height: 35px;
}
.param label { text-align: right; white-space: nowrap; margin-left: -20px; }
.param select { grid-column: 2 / 4; height: 45px; margin-left: 14px; }
.param output { text-align: right; font-size: 23px; line-height: 35px; white-space: nowrap; }
.bank { width: 33px; height: 33px; margin-left: 33px; }
input[type="range"] {
  appearance: none;
  min-width: 0;
  height: 26px;
  margin: 0 11px 0 14px;
  background: transparent;
}
input[type="range"]::-webkit-slider-runnable-track {
  box-sizing: border-box;
  height: 14px;
  border: 2px solid #b2b2b2;
  border-radius: 7px;
  background: linear-gradient(to right, #0075ff calc(13px + var(--p) * (100% - 26px)), #efefef 0) border-box;
}
input[type="range"]::-webkit-slider-thumb {
  appearance: none;
  width: 26px;
  height: 26px;
  margin-top: -8px;
  border-radius: 50%;
  background: #0075ff;
}
```
